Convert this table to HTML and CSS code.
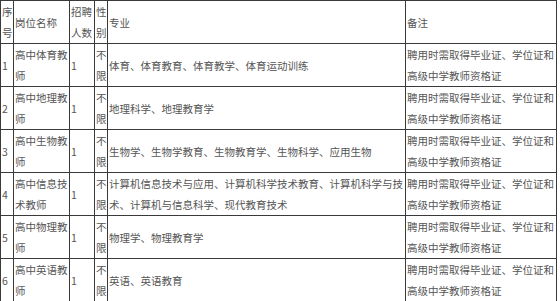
FILE: index.html
```html
<!DOCTYPE html>
<html lang="zh-CN">
<head>
    <meta charset="UTF-8">
    <title>招聘岗位表</title>
    <link rel="stylesheet" href="styles.css">
</head>
<body>
    <table class="jobs">
        <colgroup>
            <col class="c-no">
            <col class="c-name">
            <col class="c-num">
            <col class="c-sex">
            <col class="c-major">
            <col class="c-note">
        </colgroup>
        <tr>
            <td>序号</td>
            <td>岗位名称</td>
            <td>招聘人数</td>
            <td>性别</td>
            <td>专业</td>
            <td>备注</td>
        </tr>
        <tr>
            <td>1</td>
            <td>高中体育教师</td>
            <td>1</td>
            <td>不限</td>
            <td>体育、体育教育、体育教学、体育运动训练</td>
            <td>聘用时需取得毕业证、学位证和高级中学教师资格证</td>
        </tr>
        <tr>
            <td>2</td>
            <td>高中地理教师</td>
            <td>1</td>
            <td>不限</td>
            <td>地理科学、地理教育学</td>
            <td>聘用时需取得毕业证、学位证和高级中学教师资格证</td>
        </tr>
        <tr>
            <td>3</td>
            <td>高中生物教师</td>
            <td>1</td>
            <td>不限</td>
            <td>生物学、生物学教育、生物教育学、生物科学、应用生物</td>
            <td>聘用时需取得毕业证、学位证和高级中学教师资格证</td>
        </tr>
        <tr>
            <td>4</td>
            <td>高中信息技术教师</td>
            <td>1</td>
            <td>不限</td>
            <td>计算机信息技术与应用、计算机科学技术教育、计算机科学与技术、计算机与信息科学、现代教育技术</td>
            <td>聘用时需取得毕业证、学位证和高级中学教师资格证</td>
        </tr>
        <tr>
            <td>5</td>
            <td>高中物理教师</td>
            <td>1</td>
            <td>不限</td>
            <td>物理学、物理教育学</td>
            <td>聘用时需取得毕业证、学位证和高级中学教师资格证</td>
        </tr>
        <tr>
            <td>6</td>
            <td>高中英语教师</td>
            <td>1</td>
            <td>不限</td>
            <td>英语、英语教育</td>
            <td>聘用时需取得毕业证、学位证和高级中学教师资格证</td>
        </tr>
    </table>
</body>
</html>
```

FILE: styles.css
```css
/* Page */
body {
    margin: 0;
    padding: 0;
    background: #fff;
    font-family: "Noto Sans CJK SC", "Noto Sans", sans-serif;
    color: #555;
}

/* Jobs table */
.jobs {
    border-collapse: collapse;
    table-layout: fixed;
    width: 557px;
    font-size: 10.5px;
    line-height: 21px;
}

.jobs td {
    border: 1px solid #3a3a3a;
    padding: 0 0 0 1px;
    vertical-align: middle;
    text-align: left;
    word-break: break-all;
}

.c-no { width: 13px; }
.c-name { width: 56px; }
.c-num { width: 25px; }
.c-sex { width: 13px; }
.c-major { width: 298px; }
.c-note { width: 151px; }
```
